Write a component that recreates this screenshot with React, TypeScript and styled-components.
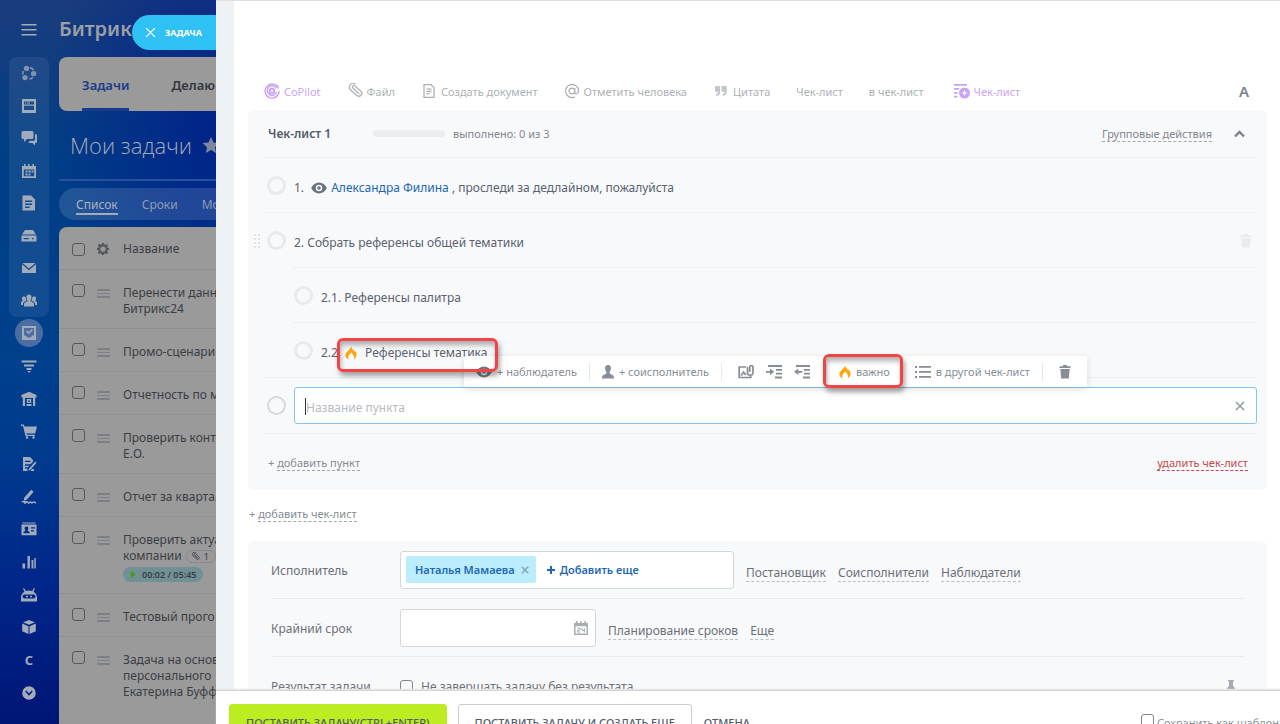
import React from "react";
import styled, { createGlobalStyle, css } from "styled-components";

const GlobalStyle = createGlobalStyle`
  *, *::before, *::after { box-sizing: border-box; }
  body { margin: 0; overflow: hidden; background: #fff; font-family: "Noto Sans", "Open Sans", sans-serif; font-size: 12px; color: #59626e; }
  button, input { font: inherit; color: inherit; }
  button { padding: 0; border: 0; background: none; cursor: pointer; }
  a { color: inherit; text-decoration: none; }
  ul, ol, h1, h2, p { margin: 0; padding: 0; list-style: none; font-weight: inherit; font-size: inherit; }
  svg { display: block; flex: none; }
`;

const Screen = styled.div`
  display: flex;
  height: 100vh;
  overflow: hidden;
`;

/* ---------- dimmed page behind the slider ---------- */

const Backdrop = styled.div`
  position: relative;
  flex: 0 0 216px;
  display: flex;
  overflow: hidden;
  background:
    radial-gradient(ellipse 170px 260px at 216px 130px, rgba(0, 32, 138, 0.9), rgba(0, 32, 138, 0) 100%),
    linear-gradient(180deg, #1a3c7c 0, #003f86 22%, #00408c 50%, #003a8e 64%, #00278a 80%, #001676 100%);
`;

const Rail = styled.nav`
  flex: 0 0 59px;
  display: flex;
  flex-direction: column;
  align-items: center;
  padding-right: 1px;
  color: #a2abba;
`;

const MenuButton = styled.button`
  display: grid;
  place-items: center;
  width: 40px;
  height: 57px;
`;

const RailGroup = styled.ul<{ $tinted?: boolean }>`
  display: flex;
  flex-direction: column;
  width: 40px;
  height: ${(p) => (p.$tinted ? 260 : 392)}px;
  border-radius: 8px;
  background: ${(p) => (p.$tinted ? "rgba(255, 255, 255, 0.07)" : "none")};
`;

const RailItem = styled.li`
  flex: 1;
  display: grid;
  place-items: center;
`;

const RailLink = styled.a<{ $active?: boolean }>`
  display: grid;
  place-items: center;
  width: 28px;
  height: 28px;
  border-radius: 50%;
  font-size: 13px;
  font-weight: 700;
  background: ${(p) => (p.$active ? "#4a6ea3" : "none")};
`;

const BackPage = styled.main`
  flex: 1;
  min-width: 0;
  white-space: nowrap;
`;

const Brand = styled.div`
  height: 57px;
  font-size: 20px;
  font-weight: 600;
  line-height: 58px;
  color: #9c9fa6;
`;

const Tabs = styled.div`
  display: flex;
  gap: 42px;
  height: 54px;
  padding-left: 23px;
  border-radius: 8px 0 0 8px;
  background: #9a9a9a;
  overflow: hidden;
`;

const Tab = styled.a<{ $active?: boolean }>`
  border-bottom: 3px solid ${(p) => (p.$active ? "#173a8a" : "transparent")};
  color: ${(p) => (p.$active ? "#1b3c8c" : "#33373d")};
  font-size: 13px;
  font-weight: 600;
  line-height: 56px;
`;

const Heading = styled.h1`
  display: flex;
  align-items: center;
  gap: 10px;
  height: 70px;
  padding-left: 11px;
  border-bottom: 2px solid #2b4f9b;
  font-family: "Open Sans", sans-serif;
  font-size: 22px;
  font-weight: 300;
  color: #a5aab5;
`;

const Views = styled.div`
  display: flex;
  gap: 24px;
  height: 32px;
  margin: 7px 0;
  padding-left: 17px;
  border-radius: 16px 0 0 16px;
  background: rgba(255, 255, 255, 0.13);
  color: #8f9bb4;
  overflow: hidden;
`;

const ViewLink = styled.a<{ $active?: boolean }>`
  height: 27px;
  line-height: 34px;
  border-bottom: 2px solid ${(p) => (p.$active ? "#a5aab5" : "transparent")};
  color: ${(p) => (p.$active ? "#b0b4bd" : "inherit")};
`;

const Grid = styled.table`
  width: 100%;
  table-layout: fixed;
  border-spacing: 0;
  background: #9a9a9a;
  border-radius: 8px 0 0 0;
  color: #3a3e44;
  line-height: 16px;

  th, td {
    padding: 15px 0 11px;
    border-bottom: 1px solid #8f9091;
    vertical-align: top;
    text-align: left;
    font-weight: 400;
  }
  th { height: 43px; padding: 2px 0 0; vertical-align: middle; }
  th:first-child { width: 38px; }
  th:nth-child(2) { width: 26px; }
  th:first-child, td:first-child { padding-left: 13px; }
  td:first-child { padding-top: 14px; }
  tbody tr:last-child td { padding-bottom: 40px; }
`;

const TickBox = styled.input.attrs({ type: "checkbox" })<{ $edge?: string }>`
  appearance: none;
  display: block;
  flex: none;
  width: 13px;
  height: 13px;
  margin: 0;
  border: 1px solid ${(p) => p.$edge ?? "#55595f"};
  border-radius: 3px;
`;

const RowGrip = styled.span`
  display: block;
  width: 13px;
  height: 9px;
  margin-top: 4px;
  border: solid #7d8186;
  border-width: 2px 0;
  background: linear-gradient(#7d8186, #7d8186) center / 100% 1px no-repeat;
`;

const Clip = styled.div`
  display: inline-flex;
  align-items: center;
  gap: 4px;
  height: 13px;
  margin-left: 4px;
  padding: 0 6px 0 4px;
  border: 1px solid #868a8e;
  border-radius: 7px;
  font-size: 9px;
  vertical-align: middle;
`;

const Timer = styled.div`
  display: flex;
  align-items: center;
  gap: 6px;
  width: 80px;
  height: 15px;
  margin-top: 3px;
  padding-left: 8px;
  border-radius: 8px;
  background: #709096;
  font-size: 9px;
  font-weight: 600;
`;

const SliderLabel = styled.button`
  position: absolute;
  top: 15px;
  right: 0;
  display: flex;
  align-items: center;
  gap: 9px;
  width: 84px;
  height: 35px;
  padding-left: 13px;
  border-radius: 18px 0 0 18px;
  background: #2fc0f4;
  color: #fff;
  font-size: 9px;
  font-weight: 700;
`;

/* ---------- slider ---------- */

const Slider = styled.section`
  flex: 1;
  min-width: 0;
  display: flex;
  flex-direction: column;
  border-top: 1px solid #dcdfe2;
  background: #fff;
`;

const Scroll = styled.div`
  flex: 1;
  min-height: 0;
  overflow: hidden;
  padding: 79px 13px 0 14px;
  border-left: 18px solid #eef2f5;
`;

const EditorBar = styled.div`
  display: flex;
  align-items: center;
  gap: 26px;
  height: 22px;
  margin-bottom: 8px;
  padding: 0 18px 0 16px;
  font-size: 11px;
  color: #adb1b6;
`;

const EditorButton = styled.button<{ $accent?: boolean }>`
  display: flex;
  align-items: center;
  gap: 4px;
  white-space: nowrap;
  color: ${(p) => (p.$accent ? "#c8a4f3" : "inherit")};
`;

const AiListButton = styled(EditorButton)`
  margin-left: 4px;
`;

const FontButton = styled.button`
  margin-left: auto;
  font-size: 15px;
  font-weight: 600;
  color: #79818c;
`;

const Card = styled.section`
  border-radius: 6px;
  background: #f8f9fb;
`;

const divider = css`
  border-bottom: 1px solid #edeff2;
`;

const Checklist = styled(Card)`
  height: 380px;
  padding: 0 10px 0 16px;
`;

const ListHead = styled.header`
  ${divider}
  display: flex;
  align-items: center;
  height: 48px;
  padding: 0 12px 0 4px;
  font-size: 11px;
  color: #80868e;
`;

const ListTitle = styled.h2`
  width: 105px;
  font-size: 12px;
  font-weight: 600;
  color: #525c69;
`;

const Progress = styled.div`
  width: 72px;
  height: 7px;
  margin-right: 8px;
  border-radius: 4px;
  background: #ebedef;
`;

const DashedButton = styled.button<{ $danger?: boolean }>`
  border-bottom: 1px dashed ${(p) => (p.$danger ? "#c4484d" : "#a1a6ac")};
  line-height: 15px;
  color: ${(p) => (p.$danger ? "#c4484d" : "inherit")};
`;

const GroupActions = styled(DashedButton)`
  margin: 0 22px 0 auto;
`;

const Items = styled.ol``;

const Item = styled.li<{ $nested?: boolean; $indentLine?: boolean }>`
  position: relative;
  display: flex;
  align-items: center;
  height: 55px;
  padding-left: ${(p) => (p.$nested ? 30 : 3)}px;

  &::after {
    content: "";
    position: absolute;
    left: ${(p) => (p.$indentLine ? 28 : 0)}px;
    right: 0;
    bottom: 0;
    height: 1px;
    background: #edeff2;
  }
`;

const RoundCheck = styled.input.attrs({ type: "checkbox" })<{ $strong?: boolean }>`
  appearance: none;
  flex: none;
  width: 19px;
  height: 19px;
  margin: 0 8px 1px 0;
  border: ${(p) => (p.$strong ? "2px solid #d6dade" : "3px solid #e8ebee")};
  border-radius: 50%;
`;

const ItemText = styled.label`
  display: flex;
  align-items: center;
  gap: 4px;
  padding-top: 4px;
  white-space: pre;
`;

const Person = styled.a`
  color: #2067b0;
`;

const DragHandle = styled.span`
  position: absolute;
  left: -10px;
  top: 21px;
  color: #e3e6e9;
`;

const GhostTrash = styled.button`
  margin: 0 5px 0 auto;
  color: #e9ebed;
`;

const frame = css`
  content: "";
  position: absolute;
  z-index: 3;
  border: 3px solid #f24444;
  border-radius: 6px;
  box-shadow: 2px 4px 5px rgba(60, 60, 60, 0.45), inset 1px 4px 5px rgba(60, 60, 60, 0.4);
  pointer-events: none;
`;

const FramedText = styled.span`
  position: relative;
  display: flex;
  align-items: center;
  gap: 8px;

  &::after {
    ${frame}
    inset: -6px -11px -11px -8px;
  }
`;

const EditRow = styled.div`
  ${divider}
  position: relative;
  display: flex;
  align-items: center;
  height: 56px;
  padding-left: 3px;
`;

const EditField = styled.div`
  flex: 1;
  display: flex;
  align-items: center;
  height: 37px;
  padding: 1px 11px 0 10px;
  border: 1px solid #84c4f2;
  border-radius: 3px;
  background: #fff;
  color: #959ba3;
`;

const Caret = styled.span`
  width: 1px;
  height: 17px;
  background: #333;
`;

const EditInput = styled.input`
  flex: 1;
  min-width: 0;
  padding: 2px 0 0;
  border: 0;
  outline: 0;
  background: none;
  &::placeholder { color: #b6bbc1; opacity: 1; }
`;

const ItemPanel = styled.div`
  position: absolute;
  z-index: 2;
  top: -22px;
  left: 200px;
  display: flex;
  align-items: center;
  height: 31px;
  border-radius: 2px;
  background: #fff;
  box-shadow: 0 2px 6px rgba(60, 70, 80, 0.18);
  font-size: 11px;
  color: #868d96;
`;

const PanelGroup = styled.div<{ $wide?: boolean }>`
  display: flex;
  align-items: center;
  gap: 12px;
  height: 18px;
  padding: 0 ${(p) => (p.$wide ? 16 : 12)}px;
  & + & { border-left: 1px solid #e6e8eb; }
`;

const PanelButton = styled.button`
  display: flex;
  align-items: center;
  gap: 5px;
  white-space: nowrap;
`;

const FramedButton = styled(PanelButton)`
  position: relative;
  &::after {
    ${frame}
    inset: -10px -13px -9px -16px;
  }
`;

const ListFoot = styled.footer`
  display: flex;
  align-items: center;
  justify-content: space-between;
  height: 58px;
  padding: 0 9px 0 4px;
  font-size: 11px;
  color: #868c94;
`;

const AddList = styled.p`
  height: 51px;
  padding: 16px 0 0 1px;
  font-size: 11px;
  color: #868c94;
`;

const Fields = styled(Card)`
  padding: 0 22px 0 23px;
`;

const FieldRow = styled.div`
  display: flex;
  align-items: center;
  gap: 12px;
  height: 58px;
  border-bottom: 1px solid #e9ebee;
  color: #6a7078;
`;

const FieldLabel = styled.label`
  flex: 0 0 117px;
  padding-top: 2px;
  color: #6a7078;
`;

const Box = styled.div<{ $width: number }>`
  display: flex;
  align-items: center;
  gap: 11px;
  width: ${(p) => p.$width}px;
  height: 38px;
  padding: 0 6px 0 5px;
  border: 1px solid #d2d7dc;
  border-radius: 3px;
  background: #fff;
`;

const Tag = styled.span`
  display: flex;
  align-items: center;
  gap: 6px;
  height: 27px;
  padding: 0 7px 0 9px;
  border-radius: 2px;
  background: #bbedfc;
  font-size: 11px;
  font-weight: 600;
  color: #1f68b4;
  white-space: nowrap;
`;

const TagRemove = styled.button`
  color: #84a9bd;
`;

const AddMore = styled.button`
  display: flex;
  align-items: center;
  gap: 5px;
  font-size: 11px;
  font-weight: 600;
  color: #1f68b4;
  white-space: nowrap;
`;

const DateInput = styled.input`
  flex: 1;
  min-width: 0;
  border: 0;
  outline: 0;
  background: none;
`;

const FieldLink = styled.button`
  margin-top: 6px;
  border-bottom: 1px dashed #b9bec4;
  line-height: 17px;
  white-space: nowrap;
`;

const ResultRow = styled(FieldRow)`
  gap: 8px;
  height: 60px;
  & > label:first-child { flex-basis: 121px; padding-top: 0; }
`;

const Pin = styled.button`
  margin: 0 10px 0 auto;
  color: #a6abb1;
`;

const Footer = styled.footer`
  z-index: 1;
  display: flex;
  align-items: flex-start;
  gap: 11px;
  flex: 0 0 34px;
  padding: 13px 0 0 13px;
  overflow: hidden;
  background: #fff;
  border-top: 1px solid #d3d5d7;
  box-shadow: 0 -1px 1px #e3e5e7;
  white-space: nowrap;
  font-size: 11px;
`;

const ActionButton = styled.button<{ $kind?: "main" | "plain" | "link" }>`
  height: 37px;
  padding: 0 ${(p) => (p.$kind === "link" ? 0 : 16)}px;
  border: 1px solid ${(p) => (p.$kind === "main" ? "#bbed21" : p.$kind === "plain" ? "#c6cdd3" : "transparent")};
  border-radius: 3px;
  background: ${(p) => (p.$kind === "main" ? "#bbed21" : "transparent")};
  font-size: 11px;
  font-weight: 500;
  color: #535c69;
`;

const TemplateOption = styled.label`
  display: flex;
  align-items: flex-start;
  gap: 3px;
  margin: 10px 1px 0 auto;
  line-height: 18px;
  color: #8b9199;
`;

/* ---------- icons ---------- */

type IconProps = { w?: number; h?: number; box?: string; children: React.ReactNode };
const Icon = ({ w = 16, h = w, box = "0 0 16 16", children }: IconProps) => (
  <svg width={w} height={h} viewBox={box} fill="currentColor" aria-hidden="true">
    {children}
  </svg>
);

const railTop = [
  {
    name: "Коллаборации",
    art: (
      <g opacity="0.75">
        <circle cx="5.5" cy="3.4" r="2.7" />
        <circle cx="12.6" cy="8.6" r="2.7" />
        <circle cx="4" cy="12.6" r="2.7" />
        <path d="M9 2.6a6 6 0 0 1 3.6 2.6M12 12.2A6 6 0 0 1 8.4 14M2 9.4A6 6 0 0 1 2.3 6" fill="none" stroke="currentColor" strokeWidth="1.6" />
      </g>
    ),
  },
  { name: "Лента", art: <path fillRule="evenodd" d="M1 1h14v14H1Zm2 2.500v3h10v-3Zm0 4.200V12h10V7.700ZM4 4.500h1.200v1H4Zm2 0h3v1H6Z" /> },
  { name: "Чаты", art: <path d="M2 1h9a1.500 1.500 0 0 1 1.500 1.500v5A1.500 1.500 0 0 1 11 9H6l-3 3V9H2A1.500 1.500 0 0 1 .5 7.500v-5A1.500 1.500 0 0 1 2 1Zm12 3h.5A1.500 1.500 0 0 1 16 5.500v6a1.500 1.500 0 0 1-1.500 1.500H14v2.500L11.500 13H7l2-2.300h3.500A1.500 1.500 0 0 0 14 9.200Z" /> },
  { name: "Календарь", art: <path fillRule="evenodd" d="M1 3h2V1h1.500v2h2.700V1h1.500v2h2.700V1H13v2h2v12H1Zm1.800 3.500v6.800h10.400V6.500ZM4.500 7.500h2v2h-2Zm3 0h2v2h-2Zm3 0h2v2h-2Zm-6 2.900h2v2h-2Zm3 0h2v2h-2Z" /> },
  { name: "Документы", art: <path fillRule="evenodd" d="M1.500.5h8.500L14 4.500v11H1.500Zm2.500 5v1.400h7.200V5.500Zm0 3v1.400h7.200V8.500Zm0 3v1.400h4.700v-1.400Z" /> },
  { name: "Диск", art: <path fillRule="evenodd" d="M4 2h8l3 4.500H1ZM.5 7.600h15V13.500H.5Zm2.300 2.300v1.400h5V9.900Zm8.200 0v1.400h1.600V9.900Z" /> },
  { name: "Почта", art: <path d="M1.500 3h13L8 8.600ZM1 4.200l7 6 7-6V13H1Z" /> },
  { name: "Группы", art: <path d="M8 1.500c1.900 0 2.600 1.300 2.500 2.900C10.400 6 9.700 6.900 9.500 7.300v1l2.700 1.300c.6.300.8.900.8 1.600V13.500H3v-2.300c0-.7.2-1.300.8-1.600L6.500 8.300v-1C6.300 6.900 5.600 6 5.500 4.400 5.400 2.800 6.100 1.500 8 1.500ZM3 3.500c.8 0 1.400.3 1.700.8 0 1.500.5 2.500.9 3.200L3 9c-.8.500-1 1.200-1 2v1H-.7v-1.800c0-.5.200-1 .6-1.200l1.700-1v-.8C1.200 6.800.9 6 .9 5.200.9 4 1.700 3.500 3 3.500Zm10 0c-.8 0-1.400.3-1.700.8 0 1.500-.5 2.500-.9 3.200L13 9c.8.500 1 1.200 1 2v1h2.700v-1.800c0-.5-.2-1-.6-1.200l-1.700-1v-.8c.4-.4.700-1.200.7-2C15.100 4 14.300 3.500 13 3.500Z" /> },
];

const railBottom = [
  { name: "Задачи", active: true, art: <path fillRule="evenodd" d="M1 1h14v14H1Zm2 2v7.500h2l1 2h4l1-2h2V3Zm2 3.600 1.200-1.100L7.600 7l3.200-3.100L12 5 7.600 9.300Z" /> },
  { name: "CRM", art: <path d="M.5 2.500h15v2H.5Zm2.500 4h10v2H3Zm2.500 3.500h5v2h-5ZM7 13h3l-1.500 1.500H7Z" /> },
  { name: "Склад", art: <path fillRule="evenodd" d="M8 .8 15.500 4v2.500h-1.300V15H1.800V6.500H.5V4ZM4 7v8h1.500v-2h5v2H12V7Zm1.800 1h4.400v4H5.800Zm1.500 1.500V11h1.400V9.500Z" /> },
  { name: "Магазины", art: <path d="M0 1.500h2.800l.7 2H16l-1.800 7H5.500l.3 1.300H14V13H4.500L2 3H0ZM6 13.200a1.300 1.300 0 1 1 0 2.600 1.300 1.300 0 0 1 0-2.600Zm6.500 0a1.300 1.300 0 1 1 0 2.600 1.300 1.300 0 0 1 0-2.600Z" /> },
  { name: "Подпись", art: <path d="M2 1h7l3 3v1.800L9.500 8.300H4v1.400h4.300L7 11.200H4v1.300h2.500V15H2Zm2 3.700V6h5.500V4.700ZM14.200 5.500l1.300 1.300-6 7L7.500 14.800l.6-2.200ZM11 13h2v2H9.500Z" /> },
  { name: "КЭДО", art: (
    <>
      <path d="m10.300.8 2.300 1.900-6.600 7.700-3.500 1.600.9-3.400Z" />
      <path d="M.8 12.800h4L3.500 14.500c1-.5 1.800-1.700 2.700-1.700s.6 1.300 1.300 1.300 1.200-1 2-1 .6.800 1.300.8 1.300-.9 2.100-.9.900.7 2.100.7" fill="none" stroke="currentColor" strokeWidth="1.500" />
    </>
  ) },
  { name: "Сотрудники", art: <path fillRule="evenodd" d="M1.500 1.500h13v1h-13ZM.5 3.500h15v10.700H.5Zm2 8.700h6v-1.400L6.800 10V9c.5-.5.700-1.200.6-1.900-.1-1-.8-1.600-1.900-1.600S3.700 6.100 3.600 7.100c-.1.700.1 1.400.6 1.900v1l-1.700.8Zm7.500-6v1.300h4V6.200Zm0 3v1.300h3V9.200Z" /> },
  { name: "Аналитика", art: <path d="M1.500 9.500h2.600v5H1.500Zm5-7.500h2.400v12.500H6.500Zm4 4h1.900v8.500h-1.900Zm2.800-2h1.500v10.500h-1.500Z" /> },
  { name: "Роботы", art: <path fillRule="evenodd" d="M3 1l1.800 3A9 9 0 0 1 11.200 4L13 1l1 .6-1.500 3.200c2 1.200 3.300 3 3.500 5.500V14.500H0v-4.200C.2 7.800 1.500 6 3.500 4.800L2 1.600ZM3.500 7.500a2 2 0 0 0 0 4h9a2 2 0 0 0 0-4Zm1.500 1.200h2v1.500H5Zm4 0h2v1.500H9Z" /> },
  { name: "Маркет", art: <path d="M8 1 14 3.300 8 5.800 2 3.300ZM1.200 4.500 7.500 7.200V15L1.200 12.200Zm13.600 0L8.500 7.200V15l6.300-2.800Z" /> },
  { name: "Сайты", letter: "C" },
  { name: "Ещё", art: <path fillRule="evenodd" d="M8 1.200a6.800 6.800 0 1 1 0 13.600A6.800 6.800 0 0 1 8 1.200ZM4.300 6.600 8 10.800l3.700-4.200-1-1L8 8.400 5.300 5.600Z" /> },
];

const EyeIcon = () => (
  <Icon w={16} h={12} box="0 0 16 12">
    <path fill="#6b737e" fillRule="evenodd" d="M8 .5c3.500 0 6.300 2.300 7.800 5.500-1.500 3.200-4.300 5.500-7.800 5.500S1.700 9.200.2 6C1.700 2.800 4.500.5 8 .5Zm0 2.300a3.200 3.200 0 1 0 0 6.400 3.200 3.200 0 0 0 0-6.400Zm0 1.400a1.800 1.800 0 1 1 0 3.600 1.800 1.800 0 0 1 0-3.600Z" />
  </Icon>
);

const FlameIcon = () => (
  <Icon w={12} h={14} box="0 0 12 14">
    <path fill="#ffa50a" d="M6.200.2c.4 2.300 1.300 3 2.500 4 .1.700 0 1 .2 1.500.5-.3.700-.7.800-1.100 1.200 1.300 1.900 2.700 1.800 4.400-.1 2-1.300 3.700-3 4.500.7-1 .9-2.100.5-3.300C8.500 8.800 7 8 6.300 6.300 5.400 8 3.500 9 3.200 10.700c-.1 1 .1 2 .7 2.800C1.700 12.700.3 11 .4 8.900.5 5.700 5.500 4 6.200.2Z" />
  </Icon>
);

const TrashIcon = () => (
  <Icon w={12} h={14} box="0 0 12 14">
    <path d="M4 0h4v1.300h3.500V3H.5V1.300H4ZM1.300 4h9.400l-.9 9.500H2.200Z" />
  </Icon>
);

const CrossIcon = ({ size = 10, weight = 1.5 }: { size?: number; weight?: number }) => (
  <Icon w={size} box="0 0 10 10">
    <path d="m1 1 8 8M9 1 1 9" fill="none" stroke="currentColor" strokeWidth={weight} />
  </Icon>
);

const ClipIcon = ({ size = 16 }: { size?: number }) => (
  <Icon w={size}>
    <path d="m10.800 10.200-4.600-5.300a1.500 1.500 0 0 1 2.300-2l5.300 6a2.800 2.800 0 0 1-4.300 3.700L3.300 6.200A4 4 0 0 1 9.200 1M12 11.500 6.500 5.200" transform="rotate(-6 8 8)" fill="none" stroke="currentColor" strokeWidth="1.300" />
  </Icon>
);

const tasks: { id: string; lines: string[]; clip?: string; time?: string }[] = [
  { id: "t1", lines: ["Перенести данн", "Битрикс24"] },
  { id: "t2", lines: ["Промо-сценари"] },
  { id: "t3", lines: ["Отчетность по м"] },
  { id: "t4", lines: ["Проверить конт", "Е.О."] },
  { id: "t5", lines: ["Отчет за кварта."] },
  { id: "t6", lines: ["Проверить актуа", "компании"], clip: "1", time: "00:02 / 05:45" },
  { id: "t7", lines: ["Тестовый прого"] },
  { id: "t8", lines: ["Задача на основ", "персонального", "Екатерина Буфф"] },
];

const BackgroundPage = () => (
  <Backdrop>
    <Rail aria-label="Главное меню">
      <MenuButton aria-label="Меню">
        <Icon>
          <path d="M.5 3h15v1.500H.5Zm0 5h15v1.500H.5Zm0 5h15v1.500H.5Z" />
        </Icon>
      </MenuButton>
      <RailGroup $tinted>
        {railTop.map((r) => (
          <RailItem key={r.name}>
            <RailLink href="#" aria-label={r.name}>
              <Icon>{r.art}</Icon>
            </RailLink>
          </RailItem>
        ))}
      </RailGroup>
      <RailGroup>
        {railBottom.map((r) => (
          <RailItem key={r.name}>
            <RailLink href="#" aria-label={r.name} $active={r.active}>
              {r.letter ?? <Icon>{r.art}</Icon>}
            </RailLink>
          </RailItem>
        ))}
      </RailGroup>
    </Rail>
    <BackPage>
      <Brand>Битрик</Brand>
      <Tabs>
        <Tab href="#" $active>Задачи</Tab>
        <Tab href="#">Делаю</Tab>
      </Tabs>
      <Heading>
        Мои задачи
        <Icon w={18}>
          <path fill="#7f889b" d="m8 .8 2.200 4.900 5.300.6-4 3.600 1.100 5.300L8 12.500l-4.600 2.700 1.100-5.300-4-3.600 5.300-.6Z" />
        </Icon>
      </Heading>
      <Views>
        <ViewLink href="#" $active>Список</ViewLink>
        <ViewLink href="#">Сроки</ViewLink>
        <ViewLink href="#">Мо</ViewLink>
      </Views>
      <Grid>
        <thead>
          <tr>
            <th><TickBox aria-label="Выбрать все" /></th>
            <th>
              <Icon w={12}>
                <path fill="#55595f" fillRule="evenodd" d="M6.600 0h2.800l.4 2.100 1.400.6L13 1.400l1.900 1.900-1.200 1.800.6 1.400 1.700.3v2.500l-1.800.4-.6 1.400 1.200 1.900-1.900 1.900-1.800-1.200-1.400.6L9.400 16H6.600l-.4-1.700-1.400-.6L3 14.900 1.100 13l1.200-1.800-.6-1.400L0 9.400V6.600l1.700-.4.6-1.400L1.100 3 3 1.100l1.800 1.200 1.400-.6ZM8 4.500a3.500 3.500 0 1 0 0 7 3.500 3.500 0 0 0 0-7Z" />
              </Icon>
            </th>
            <th>Название</th>
          </tr>
        </thead>
        <tbody>
          {tasks.map((t) => (
            <tr key={t.id}>
              <td><TickBox aria-label={t.lines[0]} /></td>
              <td><RowGrip /></td>
              <td>
                {t.lines.map((line, i) => (
                  <div key={line}>
                    {line}
                    {t.clip && i === t.lines.length - 1 && (
                      <Clip><ClipIcon size={9} />{t.clip}</Clip>
                    )}
                  </div>
                ))}
                {t.time && (
                  <Timer>
                    <Icon w={5} h={7} box="0 0 5 7"><path fill="#459a12" d="M0 0l5 3.500L0 7Z" /></Icon>
                    {t.time}
                  </Timer>
                )}
              </td>
            </tr>
          ))}
        </tbody>
      </Grid>
    </BackPage>
    <SliderLabel>
      <CrossIcon size={11} weight={1.2} />
      ЗАДАЧА
    </SliderLabel>
  </Backdrop>
);

const Toolbar = () => (
  <EditorBar role="toolbar">
    <EditorButton $accent>
      <Icon>
        <path d="M14.500 5.500A7 7 0 1 0 15 8M12.300 5.500A4.800 4.800 0 1 0 12.600 9" fill="none" stroke="currentColor" strokeWidth="1.400" />
        <circle cx="8" cy="8" r="3.300" />
        <path d="m8 5.800.6 1.600 1.600.6-1.600.6L8 10.200l-.6-1.600L5.800 8l1.600-.6Z" fill="#fff" />
        <circle cx="13.500" cy="3" r="1" />
      </Icon>
      CoPilot
    </EditorButton>
    <EditorButton><ClipIcon />Файл</EditorButton>
    <EditorButton>
      <Icon>
        <path d="M3 1.700h7L13 4.600v9.700H3ZM5.500 6.200h5M5.500 8.500h5M5.500 10.800h3" fill="none" stroke="currentColor" strokeWidth="1.300" />
      </Icon>
      Создать документ
    </EditorButton>
    <EditorButton>
      <Icon>
        <path d="M10.800 5v4.500c0 2.200 3.700 1.800 3.700-2A6.500 6.500 0 1 0 11 13.800M10.800 8a2.900 2.900 0 1 1-5.800 0 2.900 2.900 0 0 1 5.800 0Z" fill="none" stroke="currentColor" strokeWidth="1.300" />
      </Icon>
      Отметить человека
    </EditorButton>
    <EditorButton>
      <Icon>
        <path fill="#c3c7cb" d="M2 3h5.200v5.500C7.200 11 6 12.600 3.200 13v-1.900c1.200-.3 1.700-1 1.700-2.400H2Zm6.600 0h5.200v5.500c0 2.500-1.200 4.100-4 4.500v-1.900c1.200-.3 1.700-1 1.700-2.400H8.600Z" />
      </Icon>
      Цитата
    </EditorButton>
    <EditorButton>Чек-лист</EditorButton>
    <EditorButton>в чек-лист</EditorButton>
    <AiListButton $accent>
      <Icon>
        <path d="M0 1h13v1.800H0Zm0 4h5.500L4.500 6.800H0Zm0 4h3.500v1.800H0Zm0 3.800h3.500v1.700H0Z" />
        <path fillRule="evenodd" d="M10.500 4.500a5.500 5.500 0 1 1 0 11 5.500 5.500 0 0 1 0-11Zm0 2.200-.8 2.500-2.500.8 2.500.8.8 2.500.8-2.500 2.500-.8-2.500-.8Z" />
      </Icon>
      Чек-лист
    </AiListButton>
    <FontButton aria-label="Форматирование">A</FontButton>
  </EditorBar>
);

const ItemActions = () => (
  <ItemPanel role="toolbar">
    <PanelGroup>
      <PanelButton><EyeIcon />+ наблюдатель</PanelButton>
    </PanelGroup>
    <PanelGroup>
      <PanelButton>
        <Icon w={12} h={14} box="0 0 12 14">
          <path d="M6 0c2.200 0 3 1.500 2.900 3.400C8.800 5.200 7.900 6.400 7.600 6.900v1.500l3.300 1.900c.8.500 1.100 1.500 1.100 3.200H0c0-1.700.3-2.700 1.100-3.200l3.300-1.900V6.900C4.100 6.400 3.200 5.200 3.100 3.400 3 1.500 3.800 0 6 0Z" />
        </Icon>
        + соисполнитель
      </PanelButton>
    </PanelGroup>
    <PanelGroup $wide>
      <PanelButton aria-label="Вложение">
        <Icon>
          <path d="M8 3H1.200v10.500h11.500v-1.700M3 11.500l2.500-3.300 1.700 2 .8-.7M9.500 3v5.500a2.700 2.700 0 0 0 5.500 0V3a1.700 1.700 0 0 0-3.300 0v5" fill="none" stroke="currentColor" strokeWidth="1.700" />
        </Icon>
      </PanelButton>
      <PanelButton aria-label="Увеличить отступ">
        <Icon>
          <path d="M2 1h14v1.900H2Zm8 4h6v1.700h-6Zm0 3.800h6v1.700h-6ZM9 12.500h7v1.900H9ZM0 7h4V4.500l4.300 3.300L4 11V8.700H0Z" />
        </Icon>
      </PanelButton>
      <PanelButton aria-label="Уменьшить отступ">
        <Icon>
          <path d="M2 1h14v1.900H2Zm8 4h6v1.700h-6Zm0 3.800h6v1.700h-6ZM9 12.500h7v1.900H9ZM8.300 7h-4V4.500L0 7.800 4.300 11V8.700h4Z" />
        </Icon>
      </PanelButton>
    </PanelGroup>
    <PanelGroup>
      <FramedButton><FlameIcon />важно</FramedButton>
    </PanelGroup>
    <PanelGroup>
      <PanelButton>
        <Icon>
          <path d="M0 2h2v2H0Zm4 0h12v1.800H4ZM0 7h2v2H0Zm4 0h12v1.800H4ZM0 12h2v2H0Zm4 0h12v1.800H4Z" />
        </Icon>
        в другой чек-лист
      </PanelButton>
    </PanelGroup>
    <PanelGroup $wide>
      <PanelButton aria-label="Удалить"><TrashIcon /></PanelButton>
    </PanelGroup>
  </ItemPanel>
);

export default function App() {
  return (
    <>
      <GlobalStyle />
      <Screen>
        <BackgroundPage />
        <Slider>
          <Scroll>
            <Toolbar />
            <Checklist>
              <ListHead>
                <ListTitle>Чек-лист 1</ListTitle>
                <Progress />
                выполнено: 0 из 3
                <GroupActions>Групповые действия</GroupActions>
                <button aria-label="Свернуть">
                  <Icon w={11} h={8} box="0 0 11 8">
                    <path d="M1 6.500 5.500 2 10 6.500" fill="none" stroke="#7a828c" strokeWidth="2.400" />
                  </Icon>
                </button>
              </ListHead>
              <Items>
                <Item>
                  <RoundCheck id="i1" />
                  <ItemText htmlFor="i1">
                    1. <EyeIcon /><span><Person href="#">Александра Филина</Person> , проследи за дедлайном, пожалуйста</span>
                  </ItemText>
                </Item>
                <Item $indentLine>
                  <DragHandle>
                    <Icon w={8} h={14} box="0 0 8 14">
                      <path d="M0 0h2v2H0Zm4 0h2v2H4ZM0 4h2v2H0Zm4 0h2v2H4ZM0 8h2v2H0Zm4 0h2v2H4ZM0 12h2v2H0Zm4 0h2v2H4Z" />
                    </Icon>
                  </DragHandle>
                  <RoundCheck id="i2" />
                  <ItemText htmlFor="i2">2. Собрать референсы общей тематики</ItemText>
                  <GhostTrash aria-label="Удалить пункт"><TrashIcon /></GhostTrash>
                </Item>
                <Item $nested $indentLine>
                  <RoundCheck id="i21" />
                  <ItemText htmlFor="i21">2.1. Референсы палитра</ItemText>
                </Item>
                <Item $nested>
                  <RoundCheck id="i22" />
                  <ItemText htmlFor="i22">
                    2.2 <FramedText><FlameIcon />Референсы тематика</FramedText>
                  </ItemText>
                </Item>
              </Items>
              <EditRow>
                <RoundCheck $strong aria-label="Новый пункт" />
                <EditField>
                  <Caret />
                  <EditInput placeholder="Название пункта" aria-label="Название пункта" />
                  <button aria-label="Очистить"><CrossIcon weight={1.6} /></button>
                </EditField>
                <ItemActions />
              </EditRow>
              <ListFoot>
                <span>+ <DashedButton>добавить пункт</DashedButton></span>
                <DashedButton $danger>удалить чек-лист</DashedButton>
              </ListFoot>
            </Checklist>
            <AddList>+ <DashedButton>добавить чек-лист</DashedButton></AddList>
            <Fields>
              <FieldRow>
                <FieldLabel as="span">Исполнитель</FieldLabel>
                <Box $width={334}>
                  <Tag>
                    Наталья Мамаева
                    <TagRemove aria-label="Убрать"><CrossIcon size={8} weight={2} /></TagRemove>
                  </Tag>
                  <AddMore>
                    <Icon w={8} box="0 0 8 8"><path d="M3 0h2v3h3v2H5v3H3V5H0V3h3Z" /></Icon>
                    Добавить еще
                  </AddMore>
                </Box>
                <FieldLink>Постановщик</FieldLink>
                <FieldLink>Соисполнители</FieldLink>
                <FieldLink>Наблюдатели</FieldLink>
              </FieldRow>
              <FieldRow>
                <FieldLabel htmlFor="deadline">Крайний срок</FieldLabel>
                <Box $width={196}>
                  <DateInput id="deadline" />
                  <Icon>
                    <path fill="#a8adb3" fillRule="evenodd" d="M1 3h2V1h1.500v2h2.700V1h1.500v2h2.700V1H13v2h2v12H1Zm1.500 3.200v7.300h11V6.200Z" />
                    <path d="M4.300 8.200H7v2H4.600v1.900H7.300M9 8v2.500h3M11.300 8v4.500" fill="none" stroke="#a8adb3" />
                  </Icon>
                </Box>
                <FieldLink>Планирование сроков</FieldLink>
                <FieldLink>Еще</FieldLink>
              </FieldRow>
              <ResultRow>
                <FieldLabel htmlFor="result">Результат задачи</FieldLabel>
                <TickBox id="result" $edge="#80868e" />
                <label htmlFor="result">Не завершать задачу без результата</label>
                <Pin aria-label="Закрепить">
                  <Icon w={8} h={14} box="0 0 8 14"><path d="M1 0h6v1.500H6V6l2 2v1.500H4.700V14H3.300V9.500H0V8l2-2V1.500H1Z" /></Icon>
                </Pin>
              </ResultRow>
            </Fields>
          </Scroll>
          <Footer>
            <ActionButton $kind="main">ПОСТАВИТЬ ЗАДАЧУ(CTRL+ENTER)</ActionButton>
            <ActionButton $kind="plain">ПОСТАВИТЬ ЗАДАЧУ И СОЗДАТЬ ЕЩЕ</ActionButton>
            <ActionButton $kind="link">ОТМЕНА</ActionButton>
            <TemplateOption>
              <TickBox $edge="#80868e" />
              Сохранить как шаблон
            </TemplateOption>
          </Footer>
        </Slider>
      </Screen>
    </>
  );
}
